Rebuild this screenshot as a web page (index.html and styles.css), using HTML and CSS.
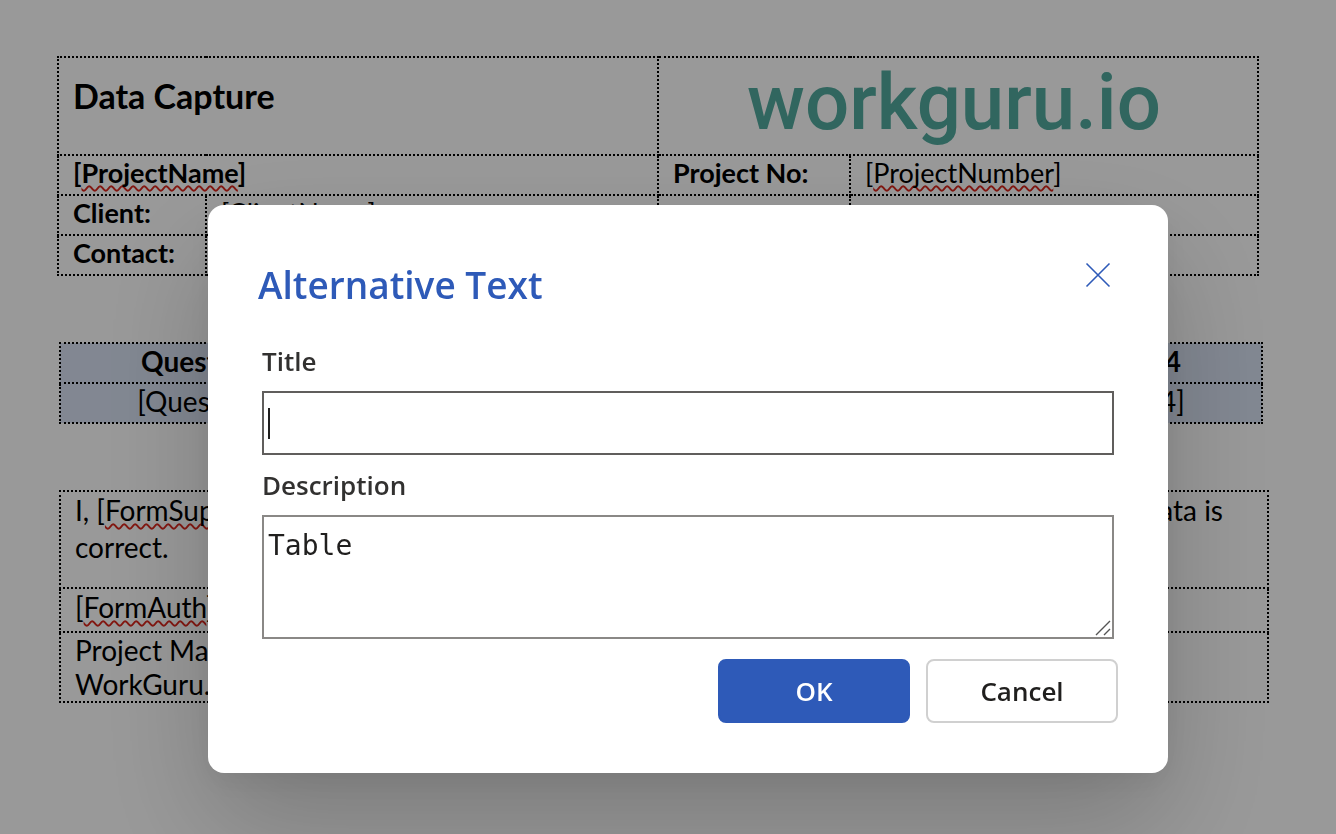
FILE: index.html
```
<!DOCTYPE html>
<html lang="en">
<head>
  <meta charset="UTF-8">
  <meta name="viewport" content="width=device-width, initial-scale=1.0">
  <title>Data Capture</title>
  <link rel="stylesheet" href="styles.css">
</head>
<body>
  <main class="document">
    <div class="block block-project">
      <table class="doc-table project-table">
        <colgroup>
          <col class="col-label">
          <col class="col-value">
          <col class="col-number-label">
          <col class="col-number">
        </colgroup>
        <tr class="title-row">
          <td colspan="2"><h1>Data Capture</h1></td>
          <td colspan="2" class="logo-cell"><span class="logo">workguru.io</span></td>
        </tr>
        <tr>
          <th colspan="2">[<span class="spell">ProjectName</span>]</th>
          <th>Project No:</th>
          <td>[<span class="spell">ProjectNumber</span>]</td>
        </tr>
        <tr>
          <th>Client:</th>
          <td>[<span class="spell">ClientName</span>]</td>
          <td></td>
          <td></td>
        </tr>
        <tr>
          <th>Contact:</th>
          <td></td>
          <td></td>
          <td></td>
        </tr>
      </table>
    </div>

    <div class="block block-questions">
      <table class="doc-table question-table">
        <tr>
          <th>Question 1</th>
          <th>Question 2</th>
          <th>Question 3</th>
          <th>Question 4</th>
        </tr>
        <tr>
          <td>[Question1]</td>
          <td>[Question2]</td>
          <td>[Question3]</td>
          <td>[Question4]</td>
        </tr>
      </table>
    </div>

    <div class="block block-signoff">
      <table class="doc-table signoff-table">
        <tr class="statement-row">
          <td>
            <div class="statement">
              <span>I, [<span class="spell">FormSupervisor</span>], confirm</span>
              <span>that the data is</span>
            </div>
            <div>correct.</div>
          </td>
        </tr>
        <tr class="auth-row">
          <td>[<span class="spell">FormAuth</span>]</td>
        </tr>
        <tr class="manager-row">
          <td>Project Manager<br>WorkGuru.io</td>
        </tr>
      </table>
    </div>
  </main>

  <div class="overlay">
    <form class="dialog" role="dialog" aria-modal="true" aria-labelledby="dialogTitle">
      <header class="dialog-header">
        <h2 id="dialogTitle">Alternative Text</h2>
        <button type="button" class="close" aria-label="Close">
          <svg viewBox="0 0 26 26" width="26" height="26" aria-hidden="true">
            <path d="M1.5 1.5 24.5 24.5M24.5 1.5 1.5 24.5" fill="none" stroke="currentColor" stroke-width="1.6"/>
          </svg>
        </button>
      </header>
      <div class="fields">
        <label for="altTitle">Title</label>
        <input type="text" id="altTitle" class="title-input">
        <label for="altDescription">Description</label>
        <div class="textarea-wrap">
          <textarea id="altDescription">Table</textarea>
          <svg class="grip" viewBox="0 0 16 16" width="16" height="16" aria-hidden="true">
            <path d="M1 15 15 1M9 15 15 9" fill="none" stroke="#555" stroke-width="1.4"/>
          </svg>
        </div>
      </div>
      <footer class="actions">
        <button type="button" class="btn btn-primary">OK</button>
        <button type="button" class="btn">Cancel</button>
      </footer>
    </form>
  </div>
</body>
</html>
```
FILE: styles.css
```
* {
  box-sizing: border-box;
}
body {
  margin: 0;
  background: #fff;
  color: #000;
  font-family: Lato, "Open Sans", sans-serif;
  font-size: 28px;
  overflow: hidden;
}

/* Document behind the dialog */
.document {
  padding-top: 56px;
}
.block-project {
  padding: 0 77px 0 57px;
}
.block-questions {
  padding: 66px 73px 0 59px;
}
.block-signoff {
  padding: 66px 67px 0 59px;
}
.doc-table {
  width: 100%;
  border-collapse: collapse;
  table-layout: fixed;
}
.doc-table th,
.doc-table td {
  height: 40px;
  padding: 0 14px;
  border: 2px dotted #000;
  line-height: 34px;
  text-align: left;
  vertical-align: top;
  white-space: nowrap;
}
.doc-table th {
  font-weight: 700;
}
.project-table {
  font-size: 27px;
}
.col-label {
  width: 148px;
}
.col-value {
  width: 452px;
}
.col-number-label {
  width: 192px;
}
.doc-table .title-row td {
  height: 98px;
}
.doc-table h1 {
  margin: 0;
  padding-top: 18px;
  font-size: 34px;
  line-height: 40px;
}
.doc-table .logo-cell {
  padding: 0 8px 0 0;
  text-align: center;
}
.logo {
  display: block;
  color: #52aa9e;
  font-family: Roboto, sans-serif;
  font-size: 78px;
  font-weight: 500;
  line-height: 90px;
}
.spell {
  text-decoration: underline wavy #d9261c 2px;
  text-underline-offset: 2px;
  text-decoration-skip-ink: none;
}
.question-table th,
.question-table td {
  background: #d9e2f3;
  text-align: center;
}
.doc-table .statement-row td {
  height: 97px;
  line-height: 37px;
}
.statement {
  display: flex;
  justify-content: space-between;
  padding-right: 30px;
}
.doc-table .auth-row td {
  height: 44px;
  line-height: 36px;
}
.doc-table .manager-row td {
  height: 70px;
}

/* Dialog */
.overlay {
  position: fixed;
  inset: 0;
  padding: 205px 168px 0 208px;
  background: rgba(0, 0, 0, 0.4);
  font-family: "Open Sans", "Noto Sans", sans-serif;
}
.dialog {
  padding: 50px;
  border-radius: 16px;
  background: #fff;
  box-shadow: 0 51px 115px rgba(0, 0, 0, 0.2), 0 10px 29px rgba(0, 0, 0, 0.06);
}
.dialog-header {
  display: flex;
  justify-content: space-between;
  align-items: flex-start;
}
.dialog-header h2 {
  margin: 0;
  color: #2e5ab8;
  font-size: 37px;
  font-weight: 600;
  line-height: 60px;
}
.close {
  display: flex;
  padding: 7px;
  border: 0;
  background: none;
  color: #2e5ab8;
  cursor: pointer;
}
.fields {
  display: flex;
  flex-direction: column;
  padding: 26px 4px 0;
}
.fields label {
  color: #323130;
  font-size: 26px;
  font-weight: 600;
  line-height: 40px;
}
.title-input {
  height: 64px;
  margin: 10px 0;
  border: 2px solid #605e5c;
  border-radius: 0;
  outline: none;
  caret-color: transparent;
  /* text cursor */
  background: linear-gradient(#201f1e, #201f1e) 4px center / 2px 31px no-repeat;
}
.textarea-wrap {
  position: relative;
  margin-top: 10px;
}
.textarea-wrap textarea {
  display: block;
  width: 100%;
  height: 124px;
  padding: 12px 4px;
  border: 2px solid #8a8886;
  outline: none;
  resize: none;
  color: #201f1e;
  font-family: "DejaVu Sans Mono", monospace;
  font-size: 28px;
  line-height: 34px;
}
.grip {
  position: absolute;
  right: 3px;
  bottom: 3px;
}
.actions {
  display: flex;
  justify-content: flex-end;
  gap: 16px;
  padding-top: 20px;
}
.btn {
  width: 192px;
  height: 64px;
  border: 2px solid #d0d0d0;
  border-radius: 8px;
  background: #fff;
  color: #201f1e;
  font-family: inherit;
  font-size: 26px;
  font-weight: 600;
  cursor: pointer;
}
.btn-primary {
  border-color: #2e5ab8;
  background: #2e5ab8;
  color: #fff;
}
```
